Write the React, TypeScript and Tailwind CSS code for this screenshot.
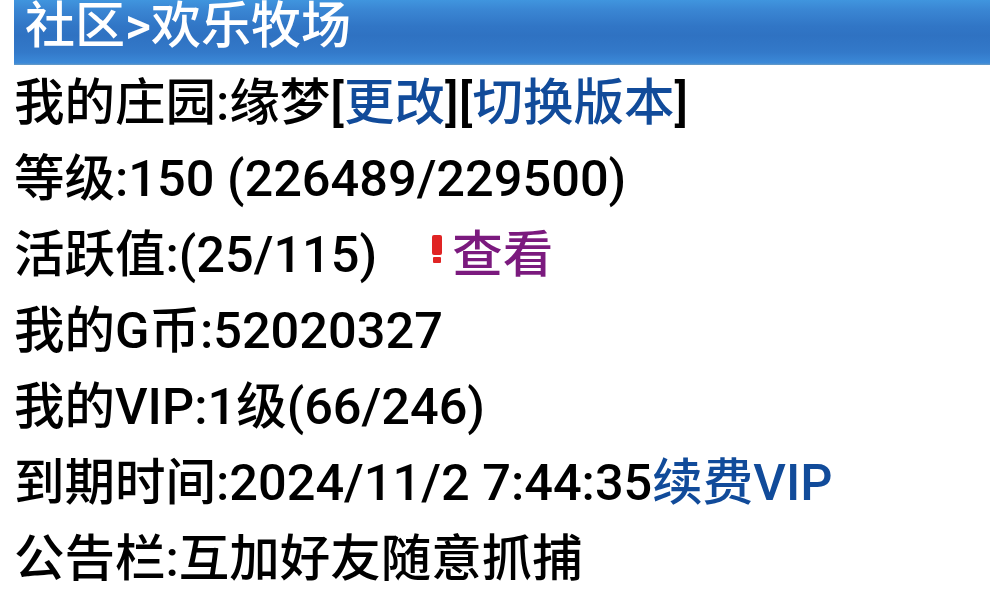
import React from "react";

function Bang() {
  return (
    <span className="inline-flex flex-col items-center gap-[2px] mr-[10px] translate-y-[-17px]">
      <span className="block w-[10px] h-[20px] bg-[#e02424] rounded-[2px]" />
      <span className="block w-[8px] h-[6px] bg-[#e02424] rounded-[1px]" />
    </span>
  );
}

export default function App() {
  const font = { fontFamily: 'Roboto, "Noto Sans CJK SC", sans-serif' };
  return (
    <div className="w-[990px] h-[608px] bg-white overflow-hidden pl-[14px]" style={font}>
      <div className="h-[65px] bg-[linear-gradient(to_bottom,#4095de_0%,#3a86d3_15%,#3176c6_40%,#2f72c2_55%,#3379c9_80%,#3b89d8_97%,#6a9cc4_100%)] pl-[11px] pt-[1px] text-white text-[50px] font-medium leading-[50px]">
        社区&gt;欢乐牧场
      </div>
      <div className="text-[50.5px] font-medium leading-[76px] text-black">
        <div>
          我的庄园:缘梦[<span className="text-[#114b9a]">更改</span>][<span className="text-[#114b9a]">切换版本</span>]
        </div>
        <div>等级:150 (226489/229500)</div>
        <div className="flex items-baseline">
          <span>活跃值:(25/115)</span>
          <span className="w-[55px]" />
          <Bang />
          <span className="text-[#7b1a7e]">查看</span>
        </div>
        <div>我的G币:52020327</div>
        <div>我的VIP:1级(66/246)</div>
        <div>
          到期时间:2024/11/2 7:44:35<span className="text-[#114b9a]">续费VIP</span>
        </div>
        <div>公告栏:互加好友随意抓捕</div>
      </div>
    </div>
  );
}
